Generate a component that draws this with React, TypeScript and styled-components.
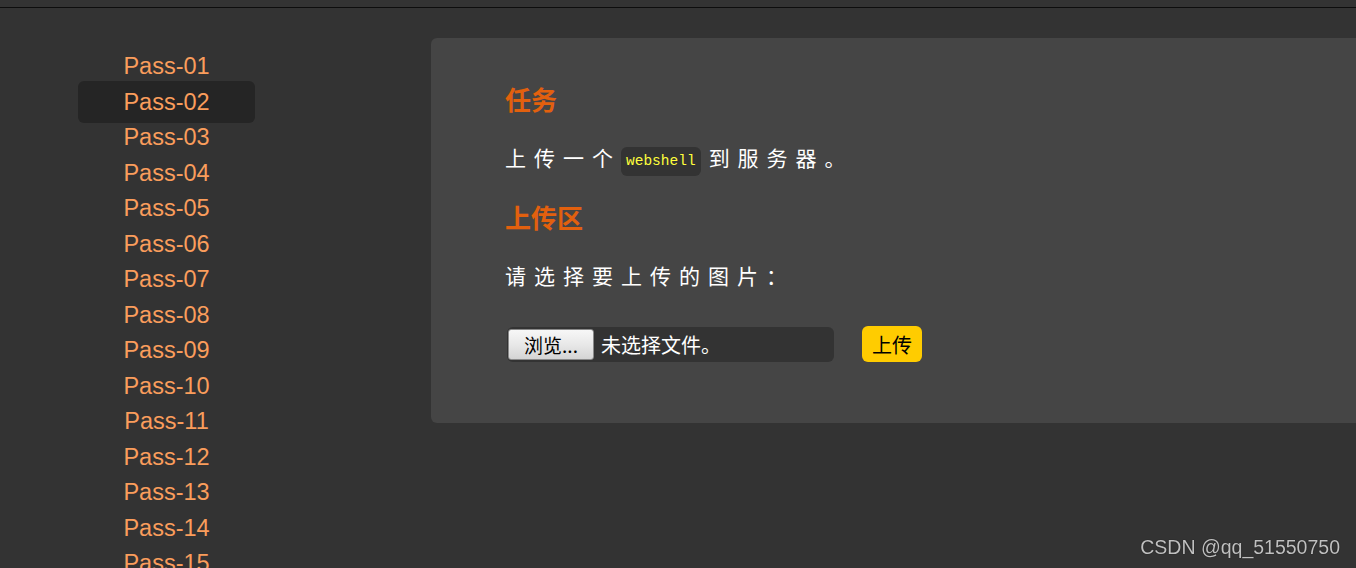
import styled, { createGlobalStyle } from 'styled-components';

const passes = Array.from({ length: 21 }, (_, i) => `Pass-${String(i + 1).padStart(2, '0')}`);
const active = 'Pass-02';

const GlobalStyle = createGlobalStyle`
  html, body {
    margin: 0;
    padding: 0;
    background: #333;
    overflow: hidden;
    font-family: "Liberation Sans", Arial, "Noto Sans CJK SC", sans-serif;
  }
`

const TopBar = styled.div`
  height: 7px;
  border-bottom: 1px solid #0d0d0d;
`

const Layout = styled.div`
  display: flex;
  align-items: flex-start;
  padding-top: 30px;
`

const Sidebar = styled.ul`
  list-style: none;
  margin: 0;
  padding: 7px 0 0 78px;
  width: 353px;
  flex-shrink: 0;
`

const NavItem = styled.li<{ $active?: boolean }>`
  width: 177px;
  height: 42px;
  line-height: 42px;
  margin-bottom: -6.5px;
  text-align: center;
  font-size: 23.5px;
  color: #fa9d5c;
  border-radius: 6px;
  background: ${p => (p.$active ? '#252525' : 'transparent')};
  cursor: pointer;
`

const Panel = styled.section`
  flex: 1;
  margin-right: -10px;
  padding: 46px 0 61px 74px;
  background: #454545;
  border-radius: 6px;
`

const Heading = styled.h2`
  margin: 0;
  font-size: 26px;
  line-height: 30px;
  font-weight: bold;
  color: #e2600e;
  font-family: "Noto Sans CJK SC", sans-serif;
`

const Text = styled.p<{ $gap: number }>`
  margin: 28px 0 ${p => p.$gap}px;
  font-size: 21px;
  line-height: 30px;
  letter-spacing: 8px;
  color: #fff;
  font-family: "Noto Sans CJK SC", sans-serif;
`

const Code = styled.code`
  display: inline-block;
  margin-right: 8px;
  padding: 0 5px;
  height: 29px;
  line-height: 29px;
  vertical-align: 1px;
  background: #333;
  border-radius: 6px;
  color: #ffff3c;
  font-size: 14.5px;
  font-weight: normal;
  letter-spacing: 0;
  font-family: "Liberation Mono", "Courier New", monospace;
`

const UploadRow = styled.div`
  display: flex;
  align-items: center;
  gap: 28px;
  padding-left: 2px;
`

const FileBox = styled.div`
  display: flex;
  align-items: center;
  width: 327px;
  height: 35px;
  padding-left: 1px;
  box-sizing: border-box;
  background: #333;
  border-radius: 6px;
`

const BrowseButton = styled.button`
  width: 86px;
  height: 31px;
  padding: 0;
  border: 1px solid #8a8a8a;
  border-radius: 3px;
  background: linear-gradient(#f7f7f7, #e8e8e8 50%, #d4d4d4);
  color: #000;
  font-size: 19px;
  font-family: "Noto Sans CJK SC", sans-serif;
`

const FileName = styled.span`
  margin-left: 7px;
  color: #fff;
  font-size: 20px;
  font-family: "Noto Sans CJK SC", sans-serif;
`

const SubmitButton = styled.button`
  width: 60px;
  height: 36px;
  padding: 0;
  border: none;
  border-radius: 6px;
  background: #ffcc00;
  color: #000;
  font-size: 20px;
  font-family: "Noto Sans CJK SC", sans-serif;
`

const Watermark = styled.div`
  position: fixed;
  right: 16px;
  bottom: 9px;
  font-size: 19.5px;
  color: #c0c0c0;
  text-shadow: 0 0 1px #000;
  font-family: "Liberation Sans", Arial, sans-serif;
`

export default function App() {
  return (
    <>
      <GlobalStyle />
      <TopBar />
      <Layout>
        <Sidebar>
          {passes.map(name => (
            <NavItem key={name} $active={name === active}>{name}</NavItem>
          ))}
        </Sidebar>
        <Panel>
          <Heading>任务</Heading>
          <Text $gap={26}>
            上传一个<Code>webshell</Code>到服务器。
          </Text>
          <Heading>上传区</Heading>
          <Text $gap={36}>请选择要上传的图片：</Text>
          <UploadRow>
            <FileBox>
              <BrowseButton>浏览...</BrowseButton>
              <FileName>未选择文件。</FileName>
            </FileBox>
            <SubmitButton>上传</SubmitButton>
          </UploadRow>
        </Panel>
      </Layout>
      <Watermark>CSDN @qq_51550750</Watermark>
    </>
  );
}
